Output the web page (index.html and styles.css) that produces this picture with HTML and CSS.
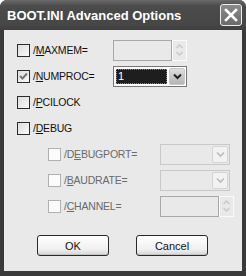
FILE: index.html
```html
<!DOCTYPE html>
<html lang="en">
<head>
    <meta charset="UTF-8">
    <title>BOOT.INI Advanced Options</title>
    <link rel="stylesheet" href="styles.css">
</head>
<body>
    <div class="window">
        <div class="titlebar">
            <span class="title">BOOT.INI Advanced Options</span>
            <span class="close">
                <svg width="14" height="14" viewBox="0 0 14 14"><path d="M2 2 L12 12 M12 2 L2 12" stroke="#fff" stroke-width="2.6" stroke-linecap="square"/></svg>
            </span>
        </div>

        <div class="client">
            <!-- main options -->
            <div class="row">
                <span class="check"></span>
                <span class="label">/<u>M</u>AXMEM=</span>
                <span class="spin disabled">
                    <span class="box"></span>
                    <span class="arrows">
                        <svg width="9" height="16" viewBox="0 0 9 16"><path d="M1.5 6 L4.5 3 L7.5 6 M1.5 10 L4.5 13 L7.5 10" stroke="#c8c8c8" stroke-width="1.4" fill="none"/></svg>
                    </span>
                </span>
            </div>
            <div class="row">
                <span class="check checked">
                    <svg width="11" height="11" viewBox="0 0 11 11"><path d="M2 5 L4.5 7.5 L9 2.5" stroke="#777" stroke-width="2" fill="none"/></svg>
                </span>
                <span class="label">/<u>N</u>UMPROC=</span>
                <span class="select active">
                    <span class="value"><span class="focus">1</span></span>
                    <span class="drop">
                        <svg width="9" height="7" viewBox="0 0 9 7"><path d="M1 1.5 L4.5 5 L8 1.5" stroke="#222" stroke-width="2" fill="none"/></svg>
                    </span>
                </span>
            </div>
            <div class="row">
                <span class="check"></span>
                <span class="label">/<u>P</u>CILOCK</span>
            </div>
            <div class="row">
                <span class="check"></span>
                <span class="label">/<u>D</u>EBUG</span>
            </div>

            <!-- debug sub options -->
            <div class="row sub">
                <span class="check disabled"></span>
                <span class="label">/D<u>E</u>BUGPORT=</span>
                <span class="select disabled">
                    <span class="value"></span>
                    <span class="drop">
                        <svg width="9" height="7" viewBox="0 0 9 7"><path d="M1 1.5 L4.5 5 L8 1.5" stroke="#bbb" stroke-width="1.6" fill="none"/></svg>
                    </span>
                </span>
            </div>
            <div class="row sub">
                <span class="check disabled"></span>
                <span class="label">/<u>B</u>AUDRATE=</span>
                <span class="select disabled">
                    <span class="value"></span>
                    <span class="drop">
                        <svg width="9" height="7" viewBox="0 0 9 7"><path d="M1 1.5 L4.5 5 L8 1.5" stroke="#bbb" stroke-width="1.6" fill="none"/></svg>
                    </span>
                </span>
            </div>
            <div class="row sub">
                <span class="check disabled"></span>
                <span class="label">/<u>C</u>HANNEL=</span>
                <span class="spin disabled">
                    <span class="box"></span>
                    <span class="arrows">
                        <svg width="9" height="16" viewBox="0 0 9 16"><path d="M1.5 6 L4.5 3 L7.5 6 M1.5 10 L4.5 13 L7.5 10" stroke="#c8c8c8" stroke-width="1.4" fill="none"/></svg>
                    </span>
                </span>
            </div>

            <div class="buttons">
                <button class="btn">OK</button>
                <button class="btn">Cancel</button>
            </div>
        </div>
    </div>
</body>
</html>
```

FILE: styles.css
```css
* {
    margin: 0;
    padding: 0;
    box-sizing: border-box;
}
body {
    background: #fff;
    width: 246px;
    height: 276px;
    overflow: hidden;
    font-family: "Liberation Sans", Arial, sans-serif;
}
.window {
    width: 246px;
    height: 276px;
    background: #3a3a3a;
    border-radius: 7px 7px 0 0;
    display: flex;
    flex-direction: column;
}
.titlebar {
    height: 30px;
    display: flex;
    align-items: center;
    justify-content: space-between;
    padding: 0 4px 0 7px;
    background: linear-gradient(#6a6a6a, #4b4b4b 20%, #474747 80%, #3f3f3f);
    border-radius: 7px 7px 0 0;
}
.title {
    color: #fff;
    font-weight: bold;
    font-size: 13px;
}
.close {
    width: 22px;
    height: 22px;
    border: 1px solid #eee;
    border-radius: 3px;
    background: linear-gradient(#8a8a8a, #6a6a6a);
    display: flex;
    align-items: center;
    justify-content: center;
}
.client {
    flex: 1;
    margin: 0 4px 5px 4px;
    background: #e9e9e9;
    padding: 7px 0 0 13px;
    font-size: 10.5px;
    letter-spacing: -0.2px;
    color: #111;
}
.row {
    height: 26px;
    display: flex;
    align-items: center;
}
.row.sub {
    padding-left: 31px;
}
.check {
    width: 13px;
    height: 13px;
    border: 1px solid #2c2c2c;
    background: linear-gradient(135deg, #dcdcdc, #fafafa);
    display: flex;
    align-items: center;
    justify-content: center;
    margin-right: 3px;
}
.check.disabled {
    border-color: #b0b0b0;
    background: #fbfbfb;
}
.label {
    width: 80px;
}
.row.sub .label {
    width: 96px;
    color: #6a6a6a;
}
.spin {
    display: flex;
    height: 21px;
}
.spin .box {
    width: 59px;
    border: 1px solid #a8a8a8;
    background: #e9e9e9;
}
.spin .arrows {
    width: 15px;
    border: 1px solid #fafafa;
    display: flex;
    align-items: center;
    justify-content: center;
}
.select {
    display: flex;
    width: 74px;
    height: 21px;
    border: 1px solid #777;
    background: #fff;
    padding: 1px;
}
.select .value {
    flex: 1;
    padding: 1px 2px 1px 1px;
}
.select .focus {
    display: block;
    height: 100%;
    background: #1e1e1e;
    color: #fff;
    border: 1px dotted #888;
    font-size: 11px;
    line-height: 13px;
    padding-left: 1px;
}
.select .drop {
    width: 16px;
    background: linear-gradient(#dedede, #b4b4b4);
    border: 1px solid #c8c8c8;
    border-radius: 2px;
    display: flex;
    align-items: center;
    justify-content: center;
}
.select.disabled {
    width: 70px;
    border-color: #c8c8c8;
    background: #e9e9e9;
}
.select.disabled .drop {
    background: #f2f2f2;
    border: 1px solid #d4d4d4;
}
.buttons {
    display: flex;
    gap: 27px;
    padding: 16px 0 0 20px;
}
.btn {
    width: 72px;
    height: 21px;
    font-family: "Liberation Sans", Arial, sans-serif;
    font-size: 11px;
    color: #111;
    border: 1px solid #2a2a2a;
    border-radius: 3px;
    background: linear-gradient(#ffffff, #f0f0f0 70%, #d6d6d6);
    box-shadow: inset 0 -1px 0 #c4c4c4;
}
```
